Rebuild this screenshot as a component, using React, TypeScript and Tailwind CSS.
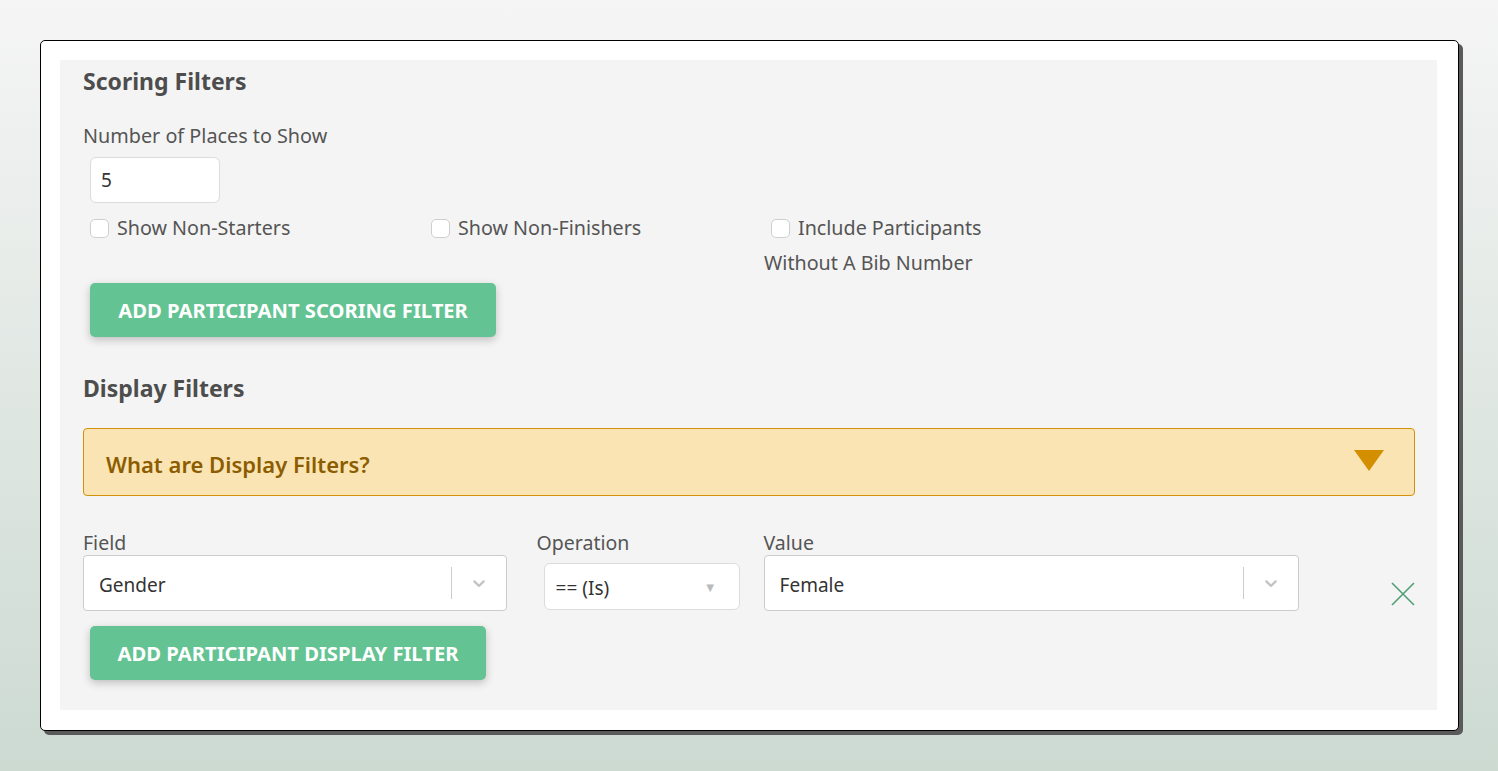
import React from "react";

function Chevron() {
  return (
    <svg viewBox="0 0 20 20" width="20" height="20" className="fill-[#c4c4c4]">
      <path d="M4.516 7.548c0.436-0.446 1.043-0.481 1.576 0l3.908 3.747 3.908-3.747c0.533-0.481 1.141-0.446 1.574 0 0.436 0.445 0.408 1.197 0 1.615-0.406 0.418-4.695 4.502-4.695 4.502-0.217 0.223-0.502 0.335-0.787 0.335s-0.57-0.112-0.789-0.335c0 0-4.287-4.084-4.695-4.502s-0.436-1.17 0-1.615z" />
    </svg>
  );
}

function Check({ label }: { label: string }) {
  return (
    <span className="inline-block ml-[7px] w-[19px] h-[19px] align-[-3px] rounded-[5px] border border-[#cfcfcf] bg-white mr-[8px]" aria-label={label} />
  );
}

export default function App() {
  return (
    <div
      className="min-h-screen bg-[linear-gradient(to_bottom,#f5f5f5,#ccdad2)] pt-[40px] pl-[40px] pr-[39px] pb-[39px] text-[#555555]"
      style={{ fontFamily: '"Noto Sans", "Open Sans", sans-serif' }}
    >
      <div className="bg-white border border-black rounded-[5px] shadow-[4px_4px_0_#5a5a5a] pt-[19px] pl-[19px] pr-[21px] pb-[20px]">
        <div className="bg-[#f4f4f4] pl-[23px] pr-[22px] pt-[6px] pb-[30px]">
          <h2 className="text-[23px] leading-[30px] font-bold text-[#4d4d4d]">Scoring Filters</h2>
          <div className="mt-[27px] text-[19.8px] leading-[26px]">Number of Places to Show</div>
          <div className="mt-[8px] ml-[7px] w-[130px] h-[46px] rounded-[6px] border border-[#dcdcdc] bg-white flex items-center pl-[10px] text-[19px] text-[#333]">
            5
          </div>
          <div className="mt-[7px] flex text-[19.7px] leading-[35px]">
            <div className="w-[341px]">
              <Check label="Show Non-Starters" />
              Show Non-Starters
            </div>
            <div className="w-[340px]">
              <Check label="Show Non-Finishers" />
              Show Non-Finishers
            </div>
            <div className="w-[240px]">
              <Check label="Include Participants" />
              Include Participants Without A Bib Number
            </div>
          </div>
          <button className="mt-[3px] ml-[7px] w-[406px] h-[54px] rounded-[5px] bg-[#63c393] text-white font-bold text-[20.2px] shadow-[0_3px_8px_rgba(0,0,0,0.22)]">
            ADD PARTICIPANT SCORING FILTER
          </button>
          <h2 className="mt-[36px] text-[23px] leading-[30px] font-bold text-[#4d4d4d]">Display Filters</h2>
          <div className="mt-[25px] h-[68px] rounded-[4px] border border-[#d4920b] bg-[#fbe4b3] flex items-center justify-between pl-[22px] pr-[30px]">
            <span className="text-[22px] font-semibold text-[#8c5d00] pt-[4px]">What are Display Filters?</span>
            <svg width="30" height="21" viewBox="0 0 30 21" className="-mt-[4px]">
              <polygon points="0,0 30,0 15,21" fill="#d48f00" />
            </svg>
          </div>
          <div className="mt-[35px] flex items-start">
            <div className="w-[424px]">
              <div className="text-[19.5px] leading-[24px]">Field</div>
              <div className="h-[56px] rounded-[4px] border border-[#cccccc] bg-white flex items-center">
                <span className="flex-1 pl-[15px] pt-[4px] text-[19px] text-[#333]">Gender</span>
                <span className="w-px h-[32px] bg-[#cccccc]" />
                <span className="w-[54px] flex justify-center">
                  <Chevron />
                </span>
              </div>
            </div>
            <div className="ml-[30px] w-[203px]">
              <div className="text-[19.5px] leading-[24px]">Operation</div>
              <div className="mt-[8px] ml-[7px] w-[196px] h-[47px] rounded-[6px] border border-[#dcdcdc] bg-white flex items-center justify-between pl-[11px] pr-[22px] text-[19px] text-[#333]">
                <span className="pt-[3px]">== (Is)</span>
                <span className="text-[13px] text-[#bbbbbb] pt-[3px]">▼</span>
              </div>
            </div>
            <div className="ml-[24px] w-[536px]">
              <div className="text-[19.5px] leading-[24px]">Value</div>
              <div className="h-[56px] rounded-[4px] border border-[#cccccc] bg-white flex items-center">
                <span className="flex-1 pl-[15px] pt-[4px] text-[19px] text-[#333]">Female</span>
                <span className="w-px h-[32px] bg-[#cccccc]" />
                <span className="w-[54px] flex justify-center">
                  <Chevron />
                </span>
              </div>
            </div>
            <div className="ml-[92px] mt-[51px]">
              <svg width="24" height="24" viewBox="0 0 24 24" stroke="#4f9e74" strokeWidth="1.6" fill="none">
                <path d="M1 1 L23 23 M23 1 L1 23" />
              </svg>
            </div>
          </div>
          <button className="mt-[15px] ml-[7px] w-[396px] h-[54px] rounded-[5px] bg-[#63c393] text-white font-bold text-[20.2px] shadow-[0_3px_8px_rgba(0,0,0,0.22)]">
            ADD PARTICIPANT DISPLAY FILTER
          </button>
        </div>
      </div>
    </div>
  );
}
